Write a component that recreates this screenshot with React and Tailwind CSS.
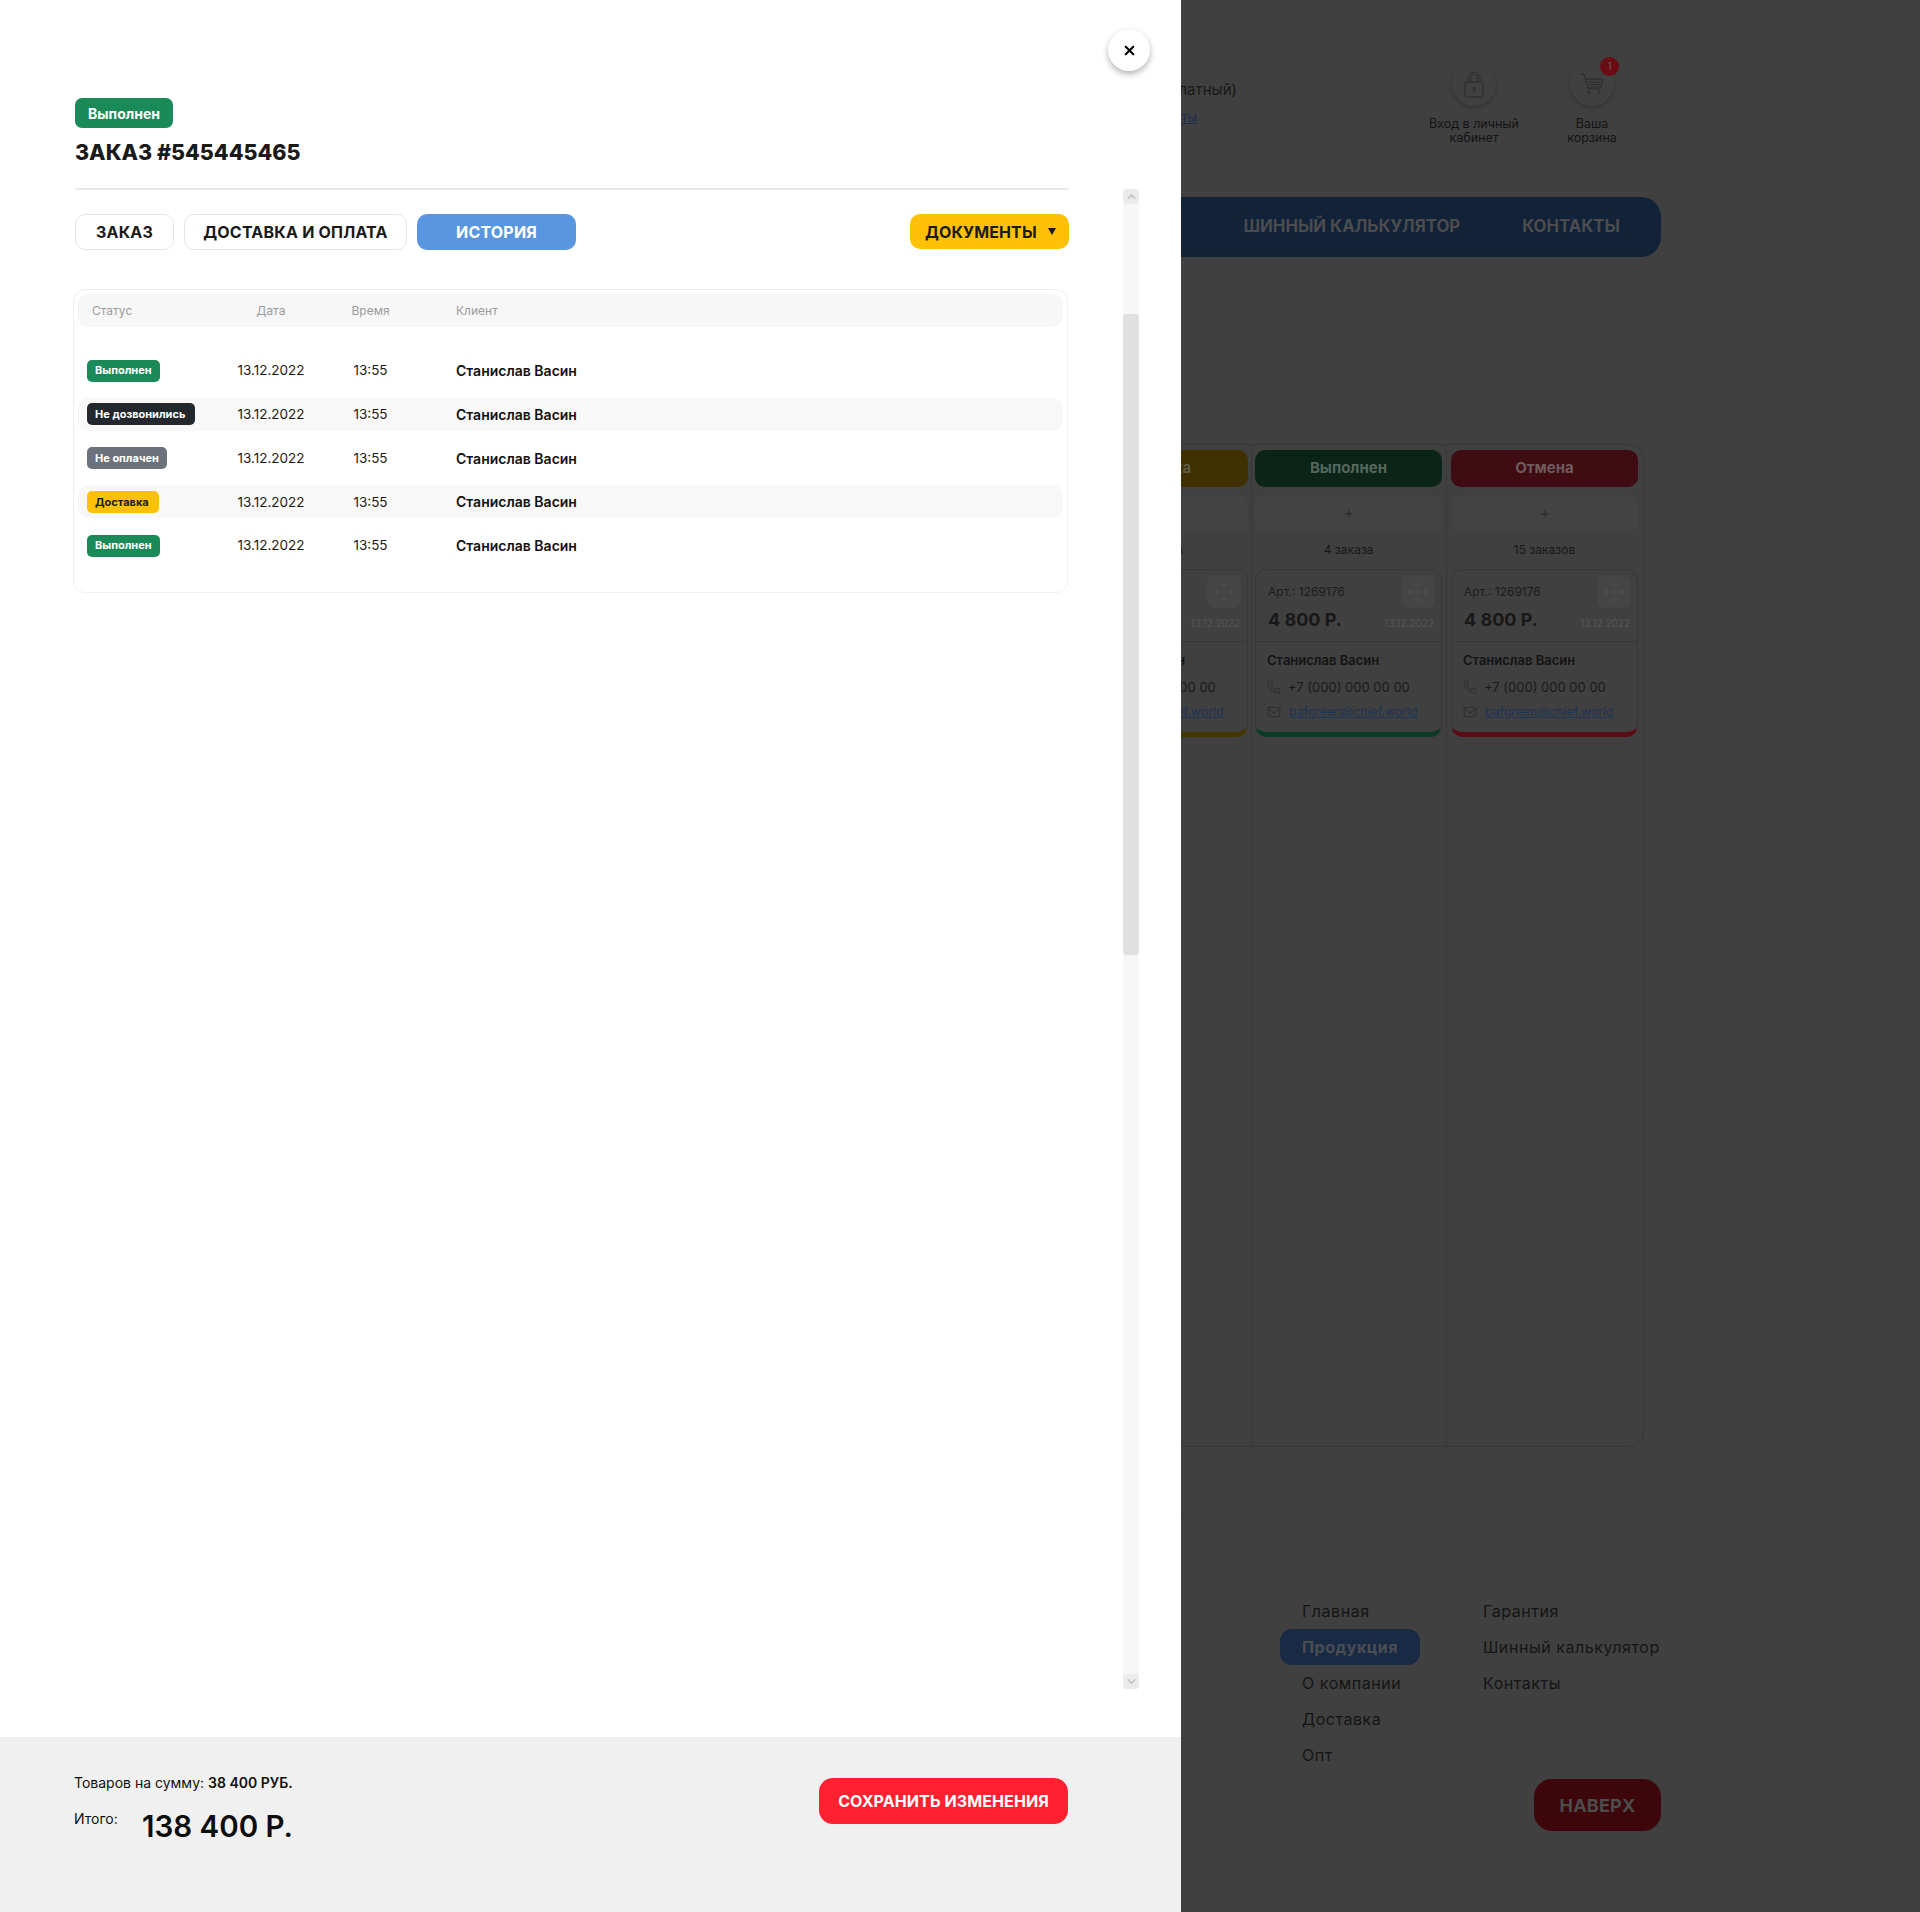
import React from 'react'
import { X, ChevronUp, ChevronDown, Plus, Move, Phone, Mail } from 'lucide-react'

const historyRows = [
  { label: 'Выполнен', badge: 'w-[73px] bg-[#1a8a58] text-white' },
  { label: 'Не дозвонились', badge: 'w-[108px] bg-[#23272e] text-white', striped: true },
  { label: 'Не оплачен', badge: 'w-[80px] bg-[#6b727b] text-white' },
  { label: 'Доставка', badge: 'w-[72px] bg-[#ffc107] text-[#1a1a1a]', striped: true },
  { label: 'Выполнен', badge: 'w-[73px] bg-[#1a8a58] text-white' },
]

const rowGrid = 'grid grid-cols-[142px_102px_97px_1fr] items-center'

function HistoryTable() {
  return (
    <div className="-ml-[2px] mt-[39px] h-[304px] w-[995px] rounded-[12px] border border-[#edf0f4] px-[4px] pt-[4px]">
      <div className={`${rowGrid} h-[33px] rounded-[10px] bg-[#f7f7f7] text-[12px] text-[#9b9b9b]`}>
        <div className="pl-[14px]">Статус</div>
        <div className="text-center">Дата</div>
        <div className="text-center">Время</div>
        <div className="pl-[37px]">Клиент</div>
      </div>
      <div className="mt-[27px] flex flex-col gap-[10.75px]">
        {historyRows.map((row, i) => (
          <div key={i} className={`${rowGrid} h-[33px] rounded-[10px] ${row.striped ? 'bg-[#f8f8f8]' : ''}`}>
            <div className="pl-[9px]">
              <div className={`${row.badge} flex h-[22px] items-center rounded-[5px] pl-[8px] text-[11px] font-bold whitespace-nowrap`}>
                {row.label}
              </div>
            </div>
            <div className="text-center text-[13.5px] text-[#1a1a1a]">13.12.2022</div>
            <div className="text-center text-[13.5px] text-[#1a1a1a]">13:55</div>
            <div className="pl-[37px] text-[14px] font-semibold text-[#111]">Станислав Васин</div>
          </div>
        ))}
      </div>
    </div>
  )
}

function Scrollbar() {
  return (
    <div className="mt-[189px] flex h-[1500px] w-[16px] flex-col rounded-[4px] bg-[#f7f7f7]">
      <div className="flex h-[15px] items-center justify-center rounded-[4px] bg-[#ebebeb] text-[#c8c8c8]">
        <ChevronUp size={13} strokeWidth={3.5} />
      </div>
      <div className="mt-[110px] h-[641px] rounded-[4px] bg-[#e0e0e0]" />
      <div className="flex-1" />
      <div className="flex h-[15px] items-center justify-center rounded-[4px] bg-[#ebebeb] text-[#c8c8c8]">
        <ChevronDown size={13} strokeWidth={3.5} />
      </div>
    </div>
  )
}

function OrderPanel() {
  return (
    <div className="absolute top-0 bottom-0 left-0 flex w-[1181px] flex-col bg-white">
      <button className="absolute top-[29px] left-[1108px] flex h-[42px] w-[42px] items-center justify-center rounded-full bg-white text-black shadow-[0_3px_6px_rgba(0,0,0,0.3)]">
        <X size={15} strokeWidth={3.5} />
      </button>

      <div className="flex flex-1">
        <div className="ml-[75px] w-[994px] pt-[98px]">
          <div className="flex h-[30px] w-[98px] items-center justify-center rounded-[7px] bg-[#1a8a58] text-[14px] font-bold text-white">
            Выполнен
          </div>
          <h1 className="mt-[9px] text-[21.5px] leading-[30px] font-extrabold text-[#1a1a1a]">ЗАКАЗ #545445465</h1>
          <div className="mt-[21px] h-[2px] bg-[#e8e8e8]" />

          <div className="mt-[24px] flex items-start">
            <button className="h-[36px] w-[99px] rounded-[10px] border border-[#e3e3e3] text-[16px] font-bold tracking-[0.2px] text-[#1a1a1a]">
              ЗАКАЗ
            </button>
            <button className="ml-[10px] h-[36px] w-[223px] rounded-[10px] border border-[#e3e3e3] text-[16px] font-bold tracking-[0.2px] text-[#1a1a1a]">
              ДОСТАВКА И ОПЛАТА
            </button>
            <button className="ml-[10px] h-[36px] w-[159px] rounded-[10px] bg-[#5a96e0] text-[16px] font-bold tracking-[0.2px] text-white">
              ИСТОРИЯ
            </button>
            <button className="ml-auto flex h-[35px] w-[159px] items-center rounded-[10px] bg-[#ffc107] pl-[15px] text-[16px] font-bold tracking-[0.1px] text-[#1a1a1a]">
              ДОКУМЕНТЫ
              <svg className="ml-[11px]" width="8" height="7" viewBox="0 0 8 7">
                <polygon points="0,0 8,0 4,7" fill="#1a1a1a" />
              </svg>
            </button>
          </div>

          <HistoryTable />
        </div>
        <div className="ml-[54px]">
          <Scrollbar />
        </div>
      </div>

      <div className="flex h-[175px] shrink-0 items-start justify-between bg-[#f0f0f0] pr-[113px] pl-[74px]">
        <div className="pt-[37px] text-[#111]">
          <div className="text-[14px] leading-[18px]">
            Товаров на сумму: <span className="font-semibold">38 400 РУБ.</span>
          </div>
          <div className="mt-[14px] flex items-start">
            <span className="mt-[4px] w-[68px] text-[14px] leading-[18px]">Итого:</span>
            <span className="text-[29.5px] leading-[40px] font-semibold text-[#0d0d0d]">138 400 Р.</span>
          </div>
        </div>
        <button className="mt-[41px] h-[46px] w-[249px] rounded-[14px] bg-[#ff2030] text-[16px] font-bold tracking-[0.1px] text-white">
          СОХРАНИТЬ ИЗМЕНЕНИЯ
        </button>
      </div>
    </div>
  )
}

function OrderCard({ bar }) {
  return (
    <div className={`h-[168px] w-[187px] overflow-hidden rounded-[12px] border border-b-[5px] border-[#383838] ${bar}`}>
      <div className="relative h-[72px] border-b border-[#383838] pl-[12px]">
        <div className="pt-[14px] text-[12px] leading-[15px] text-[#1c1c1c]">Арт.: 1269176</div>
        <div className="mt-[10px] text-[18px] leading-[22px] font-bold text-[#181818]">4 800 Р.</div>
        <div className="absolute top-[5px] right-[6px] flex h-[33px] w-[34px] items-center justify-center rounded-[8px] bg-[#454545] text-[#4e4e4e]">
          <Move size={22} strokeWidth={1.25} />
        </div>
        <div className="absolute top-[46px] right-[7px] text-[10px] leading-[14px] text-[#555]">13.12.2022</div>
      </div>
      <div className="pl-[11px]">
        <div className="pt-[10px] text-[13px] leading-[17px] font-semibold text-[#141414]">Станислав Васин</div>
        <div className="mt-[9px] flex items-center text-[13px] leading-[18px] text-[#1a1a1a]">
          <Phone size={14} strokeWidth={1} className="text-[#222]" />
          <span className="ml-[7px]">+7 (000) 000 00 00</span>
        </div>
        <div className="mt-[7px] flex items-center text-[12.3px] leading-[18px]">
          <Mail size={14} strokeWidth={1} className="text-[#222]" />
          <span className="ml-[8px] text-[#1d3557] underline">bafgreen@chief.world</span>
        </div>
      </div>
    </div>
  )
}

const kanbanColumns = [
  { title: 'Доставка', count: '8 заказов', col: 'w-[195px] pl-[5px]', head: 'bg-[#403000] text-[#5f5a45]', bar: 'border-b-[#453600]' },
  { title: 'Выполнен', count: '4 заказа', col: 'w-[195px] pl-[3px] border-l border-[#383838]', head: 'bg-[#0a2418] text-[#55675c]', bar: 'border-b-[#0b3a25]' },
  { title: 'Отмена', count: '15 заказов', col: 'w-[197px] pl-[4px] border-l border-[#383838]', head: 'bg-[#3e0c12] text-[#6e5a5d]', bar: 'border-b-[#5c0c14]' },
]

function BackgroundPage() {
  return (
    <div className="ml-[1000px] w-[661px]">
      {/* header */}
      <div className="flex h-[197px] items-start">
        <div className="w-[237px] pt-[80px] text-right">
          <div className="text-[15px] leading-[20px] whitespace-nowrap text-[#181818]">8 800 000 00 00 (бесплатный)</div>
          <div className="mt-[8px] w-[197px] text-[13px] leading-[18px] text-[#1d2d4d] underline">контакты</div>
        </div>
        <div className="ml-[187px] flex w-[100px] flex-col items-center pt-[62px]">
          <div className="flex h-[44px] w-[44px] items-center justify-center rounded-full shadow-[0_2px_4px_rgba(0,0,0,0.2)]">
            <svg width="20" height="27" viewBox="0 0 20 27" fill="none" stroke="#2a2a2a" strokeWidth="1">
              <rect x="1" y="11" width="18" height="15" rx="2" />
              <path d="M4 11V7a6 6 0 0 1 12 0v4M6.5 11V7a3.5 3.5 0 0 1 7 0v4" />
              <circle cx="10" cy="17.5" r="1.2" />
              <path d="M10 18.7V21" />
            </svg>
          </div>
          <div className="mt-[11px] text-center text-[12.5px] leading-[14px] whitespace-nowrap text-[#141414]">
            Вход в личный<br />кабинет
          </div>
        </div>
        <div className="relative ml-[18px] flex w-[100px] flex-col items-center pt-[62px]">
          <div className="flex h-[44px] w-[44px] items-center justify-center rounded-full shadow-[0_2px_4px_rgba(0,0,0,0.2)]">
            <svg width="24" height="22" viewBox="0 0 24 22" fill="none" stroke="#2a2a2a" strokeWidth="1">
              <path d="M1 1h3l4 15h12M6 6h17l-2 8H8M8 9h13M9 11.5h11" />
              <circle cx="9" cy="19.5" r="1" />
              <circle cx="19" cy="19.5" r="1" />
            </svg>
          </div>
          <div className="absolute top-[57px] left-[58px] flex h-[19px] w-[19px] items-center justify-center rounded-full bg-[#6b0c14] text-[10px] text-[#6e5a5d]">
            1
          </div>
          <div className="mt-[11px] text-center text-[12.5px] leading-[14px] whitespace-nowrap text-[#141414]">
            Ваша<br />корзина
          </div>
        </div>
      </div>

      {/* nav */}
      <div className="flex h-[60px] items-center justify-end rounded-[20px] bg-[#122238] pr-[41px] text-[16.8px] font-bold text-[#4b4c4e]">
        <span>ШИННЫЙ КАЛЬКУЛЯТОР</span>
        <span className="ml-[62px]">КОНТАКТЫ</span>
      </div>

      {/* kanban */}
      <div className="mt-[187px] flex h-[1003px] w-[644px] justify-end rounded-[14px] border border-[#383838]">
        {kanbanColumns.map((col) => (
          <div key={col.title} className={`flex flex-col pt-[5px] ${col.col}`}>
            <div className={`${col.head} flex h-[37px] w-[187px] items-center justify-center rounded-[10px] text-[15px] font-bold`}>
              {col.title}
            </div>
            <div className="mt-[8px] flex h-[38px] w-[187px] items-center justify-center rounded-[10px] bg-[#434343] text-[#222]">
              <Plus size={12} strokeWidth={1.5} />
            </div>
            <div className="mt-[9px] w-[187px] text-center text-[12px] leading-[16px] text-[#181818]">{col.count}</div>
            <div className="mt-[11px]">
              <OrderCard bar={col.bar} />
            </div>
          </div>
        ))}
      </div>

      {/* footer */}
      <div className="mt-[66px] h-[80px] bg-gradient-to-b from-[#3e3e3e] to-[#404040] to-[20%]" />
      <div className="flex text-[16px] leading-[36px] tracking-[0.55px] text-[#151515]">
        <div className="ml-[280px] w-[203px]">
          <div className="pl-[22px]">Главная</div>
          <div className="w-[140px] rounded-[12px] bg-[#182a44] pl-[22px] font-bold text-[#4a4e54]">Продукция</div>
          <div className="pl-[22px]">О компании</div>
          <div className="pl-[22px]">Доставка</div>
          <div className="pl-[22px]">Опт</div>
        </div>
        <div>
          <div>Гарантия</div>
          <div className="whitespace-nowrap">Шинный калькулятор</div>
          <div>Контакты</div>
        </div>
      </div>
      <div className="mt-[6px] flex justify-end">
        <button className="h-[52px] w-[127px] rounded-[18px] bg-[#3c060a] text-[18px] font-bold tracking-[0.2px] text-[#4c4c4c]">НАВЕРХ</button>
      </div>
    </div>
  )
}

export default function App() {
  return (
    <div className="relative h-[1912px] overflow-hidden bg-[#404040] font-['Inter',sans-serif]">
      <BackgroundPage />
      <OrderPanel />
    </div>
  )
}
